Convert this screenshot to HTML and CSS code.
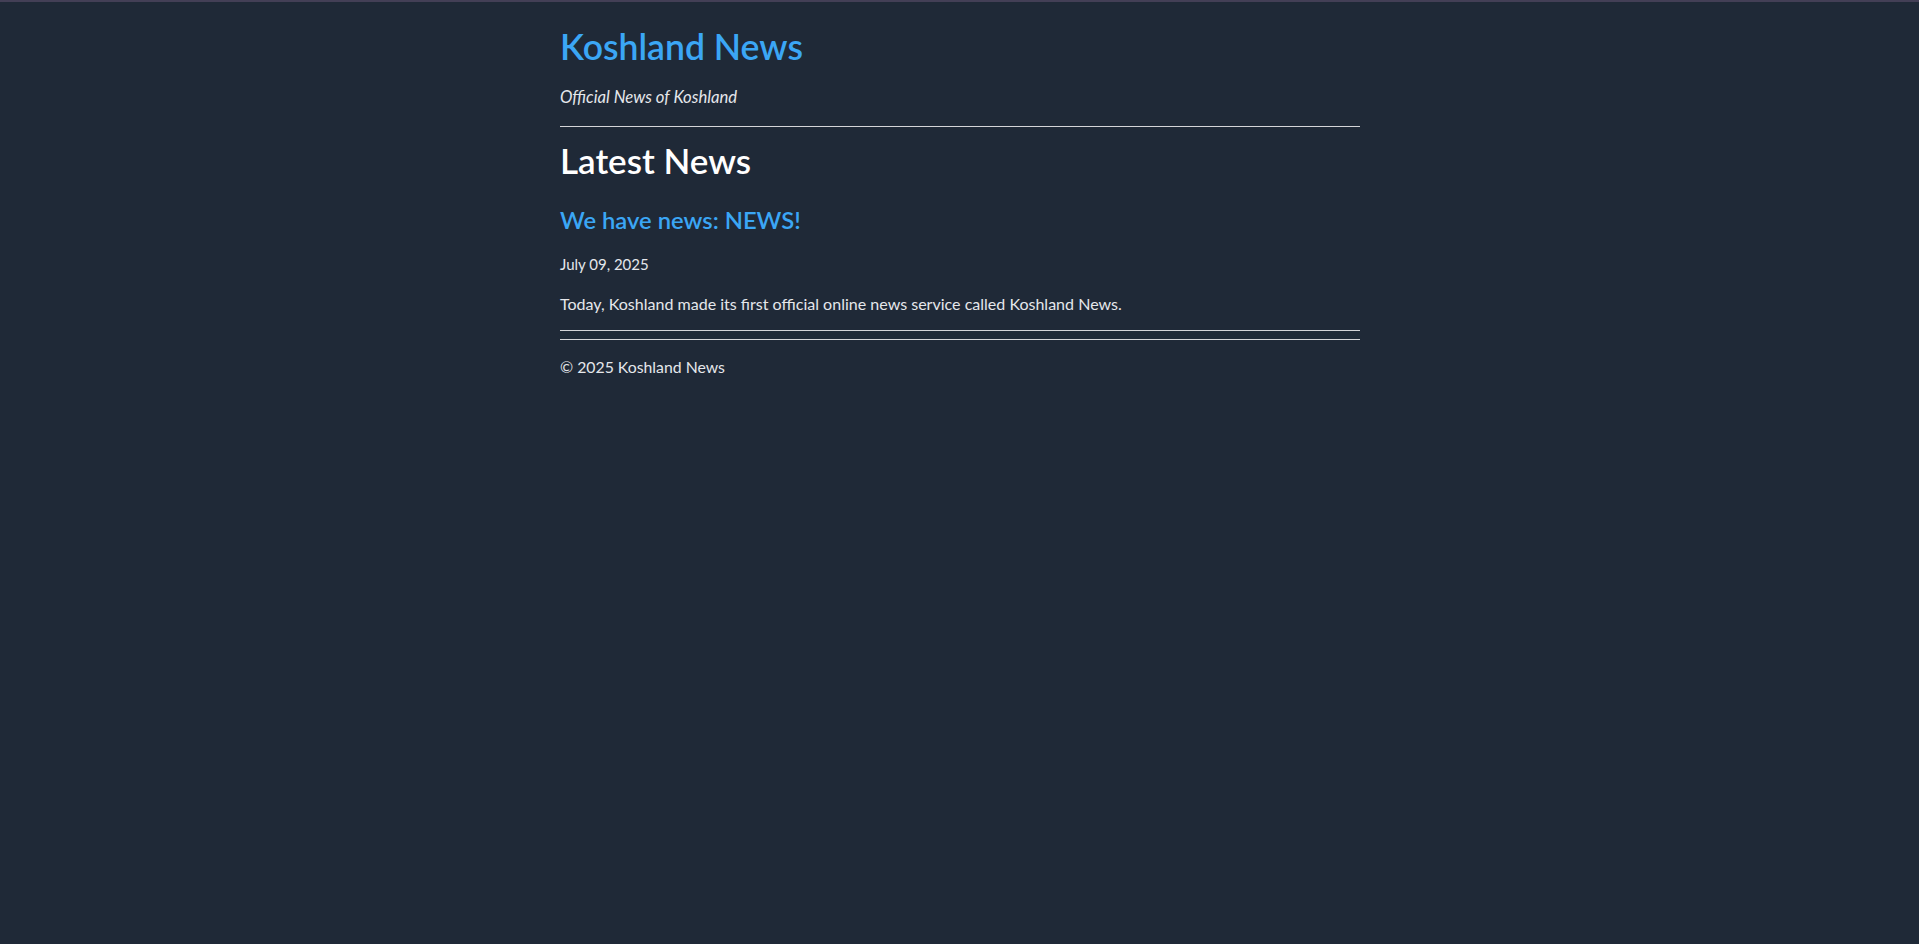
FILE: index.html
```html
<!DOCTYPE html>
<html lang="en">
<head>
<meta charset="utf-8">
<title>Koshland News</title>
<link rel="stylesheet" href="styles.css">
</head>
<body>
<div class="page">
  <header class="site-header">
    <h1 class="site-title">Koshland News</h1>
    <p class="tagline">Official News of Koshland</p>
  </header>
  <main class="content">
    <h2 class="section-title">Latest News</h2>
    <article class="article">
      <h3 class="article-title">We have news: NEWS!</h3>
      <p class="article-date">July 09, 2025</p>
      <p class="article-body">Today, Koshland made its first official online news service called Koshland News.</p>
    </article>
  </main>
  <footer class="site-footer">
    <p class="copyright">© 2025 Koshland News</p>
  </footer>
</div>
</body>
</html>
```
FILE: styles.css
```css
html, body {
  margin: 0;
  padding: 0;
}
body {
  background: #1f2937;
  border-top: 2px solid #433f56;
  padding-left: 1px;
  min-height: 942px;
  font-family: "Lato", "Open Sans", sans-serif;
  color: #e5e7eb;
}
.page {
  width: 800px;
  margin: 0 auto;
  padding-top: 23.2px;
}
.site-header {
  border-bottom: 1px solid #d4d4d8;
  padding-bottom: 17px;
}
.site-title {
  margin: 0;
  font-size: 35.6px;
  line-height: 44px;
  font-weight: 600;
  color: #3ba6f5;
}
.tagline {
  margin: 15.7px 0 0;
  font-size: 16.7px;
  line-height: 24px;
  font-style: italic;
  color: #e5e7eb;
}
.section-title {
  margin: 11.5px 0 0;
  font-size: 35px;
  line-height: 44px;
  font-weight: 600;
  color: #ffffff;
}
.article {
  border-bottom: 1px solid #d4d4d8;
  padding-bottom: 14.2px;
}
.article-title {
  margin: 22.6px 0 0;
  font-size: 23.8px;
  line-height: 30px;
  font-weight: 600;
  color: #3ba6f5;
}
.article-date {
  margin: 18.1px 0 0;
  font-size: 15px;
  line-height: 22px;
  color: #e5e7eb;
}
.article-body {
  margin: 16.6px 0 0;
  font-size: 16.04px;
  line-height: 24px;
  color: #e5e7eb;
}
.site-footer {
  margin-top: 8px;
  border-top: 1px solid #d4d4d8;
  padding-top: 16.2px;
}
.copyright {
  margin: 0;
  font-size: 15.8px;
  line-height: 22px;
  color: #e5e7eb;
}
```
